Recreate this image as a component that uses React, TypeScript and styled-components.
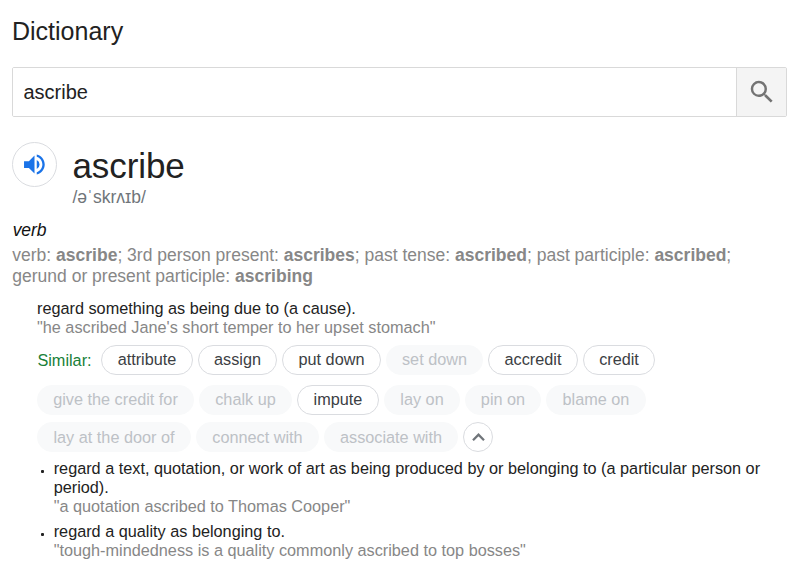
import React from "react";
import styled, { createGlobalStyle } from "styled-components";

const GlobalStyle = createGlobalStyle`
  *, *::before, *::after { box-sizing: border-box; }
  body {
    margin: 0;
    background: #fff;
    color: #222;
    font-family: "Liberation Sans", Arial, sans-serif;
  }
`;

const Page = styled.main`
  width: 800px;
  height: 571px;
  padding: 17px 13px 0 12px;
  overflow: hidden;
`;

const Title = styled.h1`
  margin: 0 0 21px;
  font-size: 25px;
  line-height: 29px;
  font-weight: 400;
`;

const SearchBar = styled.div`
  display: flex;
  height: 50px;
  border: 1px solid #d9d9d9;
  border-radius: 2px;
  overflow: hidden;
`;

const SearchInput = styled.input`
  flex: 1;
  min-width: 0;
  padding: 0 10.5px;
  border: 0;
  outline: 0;
  background: #fff;
  color: #222;
  font: 20px "Liberation Sans", Arial, sans-serif;
`;

const SearchButton = styled.button`
  display: flex;
  align-items: center;
  justify-content: center;
  width: 50px;
  padding: 0 0 0 1px;
  border: 0;
  border-left: 1px solid #d9d9d9;
  background: #f4f4f4;
  color: #737373;
`;

const Headword = styled.header`
  display: flex;
  gap: 15.5px;
  height: 70px;
  margin-top: 25px;
`;

const SpeakerButton = styled.button`
  display: flex;
  align-items: center;
  justify-content: center;
  width: 45px;
  height: 45px;
  padding: 0;
  border: 1px solid #dadce0;
  border-radius: 50%;
  background: #fff;
  color: #1a73e8;
`;

const Word = styled.h2`
  margin: 4px 0 0;
  font-size: 35px;
  line-height: 40px;
  font-weight: 400;
  letter-spacing: -0.1px;
`;

const Phonetic = styled.div`
  margin-top: 1px;
  font-size: 17.5px;
  line-height: 20px;
  color: #70757a;
`;

const PartOfSpeech = styled.div`
  margin: 8px 0 0 0.7px;
  font-size: 17.5px;
  line-height: 20px;
  font-style: italic;
  letter-spacing: -0.1px;
  color: #111;
`;

const Forms = styled.div`
  margin: 5px 0 0 0.3px;
  font-size: 17.5px;
  line-height: 21px;
  color: #878787;
`;

const Sense = styled.section`
  margin: 12px 0 0 25px;
`;

const Text = styled.div<{ $muted?: boolean }>`
  font-size: 16.25px;
  line-height: 19px;
  color: ${(p) => (p.$muted ? "#878787" : "#222")};
`;

const ChipRow = styled.div<{ $top: number }>`
  display: flex;
  gap: 5px;
  height: 30px;
  margin-top: ${(p) => p.$top}px;
`;

const Similar = styled.span`
  width: 59px;
  padding-left: 0.4px;
  font-size: 16.25px;
  line-height: 31px;
  color: #188038;
`;

const Chip = styled.span<{ $w: number; $faded?: boolean; $low?: boolean }>`
  display: flex;
  align-items: center;
  justify-content: center;
  width: ${(p) => p.$w}px;
  height: 30px;
  padding-top: ${(p) => (p.$low ? 1 : 0)}px;
  padding-bottom: ${(p) => (p.$low ? 0 : 1)}px;
  border: 1px solid ${(p) => (p.$faded ? "#f8f9fa" : "#dadce0")};
  border-radius: 15px;
  background: ${(p) => (p.$faded ? "#f8f9fa" : "#fff")};
  color: ${(p) => (p.$faded ? "#bdc1c6" : "#3c4043")};
  font-size: 16.25px;
  line-height: 19px;
  white-space: nowrap;
`;

const CollapseButton = styled.button`
  display: flex;
  align-items: center;
  justify-content: center;
  width: 30px;
  height: 30px;
  padding: 0;
  border: 1px solid #dadce0;
  border-radius: 50%;
  background: #fff;
  color: #70757a;
`;

const SubSenses = styled.ul`
  margin: 7px 0 0;
  padding: 0;
  list-style: none;
`;

const SubSense = styled.li`
  display: grid;
  grid-template-columns: 4px 1fr;
  column-gap: 12.7px;
  margin-bottom: 6px;
`;

const Bullet = styled.span`
  width: 3px;
  height: 3px;
  margin: 11px 0 0 4px;
  border-radius: 1px;
  background: #222;
`;

type ChipData = { label: string; w: number; faded?: boolean };

const rows: ChipData[][] = [
  [
    { label: "attribute", w: 92 },
    { label: "assign", w: 79 },
    { label: "put down", w: 99 },
    { label: "set down", w: 97, faded: true },
    { label: "accredit", w: 90 },
    { label: "credit", w: 72 },
  ],
  [
    { label: "give the credit for", w: 157, faded: true },
    { label: "chalk up", w: 93, faded: true },
    { label: "impute", w: 82 },
    { label: "lay on", w: 76, faded: true },
    { label: "pin on", w: 76, faded: true },
    { label: "blame on", w: 100, faded: true },
  ],
  [
    { label: "lay at the door of", w: 154, faded: true },
    { label: "connect with", w: 123, faded: true },
    { label: "associate with", w: 134, faded: true },
  ],
];

const rowTops = [8, 10, 7];

export default function App() {
  return (
    <>
      <GlobalStyle />
      <Page>
        <Title>Dictionary</Title>
        <SearchBar>
          <SearchInput defaultValue="ascribe" aria-label="Search word" />
          <SearchButton aria-label="Search">
            <svg width="30" height="30" viewBox="0 0 24 24" fill="currentColor">
              <path d="M15.5 14h-.79l-.28-.27A6.47 6.47 0 0 0 16 9.5 6.5 6.5 0 1 0 9.5 16c1.61 0 3.09-.59 4.23-1.57l.27.28v.79l5 4.99L20.49 19l-4.99-5zm-6 0C7.01 14 5 11.99 5 9.5S7.01 5 9.5 5 14 7.01 14 9.5 11.99 14 9.5 14z" />
            </svg>
          </SearchButton>
        </SearchBar>

        <Headword>
          <SpeakerButton aria-label="Listen">
            <svg width="27" height="27" viewBox="0 0 24 24" fill="currentColor">
              <path d="M2.7 9v6H7l5 5V4L7 9H2.7zm13.8 3A4.5 4.5 0 0 0 14 7.97v8.05A4.47 4.47 0 0 0 16.5 12zM14 3.1v2.06c2.89.86 5 3.67 5 6.84s-2.11 5.98-5 6.84v2.06c4.01-.91 7.1-4.62 7.1-8.9S18.01 4.01 14 3.1z" />
            </svg>
          </SpeakerButton>
          <div>
            <Word>ascribe</Word>
            <Phonetic>/əˈskrʌɪb/</Phonetic>
          </div>
        </Headword>

        <PartOfSpeech>verb</PartOfSpeech>
        <Forms>
          verb: <b>ascribe</b>; 3rd person present: <b>ascribes</b>; past tense: <b>ascribed</b>; past participle: <b>ascribed</b>;
          <br />
          gerund or present participle: <b>ascribing</b>
        </Forms>

        <Sense>
          <Text>regard something as being due to (a cause).</Text>
          <Text $muted>"he ascribed Jane's short temper to her upset stomach"</Text>
          {rows.map((row, i) => (
            <ChipRow key={i} $top={rowTops[i]}>
              {i === 0 && <Similar>Similar:</Similar>}
              {row.map((c) => (
                <Chip key={c.label} $w={c.w} $faded={c.faded} $low={i === 2}>
                  {c.label}
                </Chip>
              ))}
              {i === 2 && (
                <CollapseButton aria-label="Show less">
                  <svg width="13" height="8" viewBox="0 0 13 8" fill="none" stroke="currentColor" strokeWidth="2.3">
                    <path d="M1 7.2l5.5-5.5L12 7.2" />
                  </svg>
                </CollapseButton>
              )}
            </ChipRow>
          ))}
          <SubSenses>
            <SubSense>
              <Bullet />
              <div>
                <Text>
                  regard a text, quotation, or work of art as being produced by or belonging to (a particular person or
                  <br />
                  period).
                </Text>
                <Text $muted>"a quotation ascribed to Thomas Cooper"</Text>
              </div>
            </SubSense>
            <SubSense>
              <Bullet />
              <div>
                <Text>regard a quality as belonging to.</Text>
                <Text $muted>"tough-mindedness is a quality commonly ascribed to top bosses"</Text>
              </div>
            </SubSense>
          </SubSenses>
        </Sense>
      </Page>
    </>
  );
}
